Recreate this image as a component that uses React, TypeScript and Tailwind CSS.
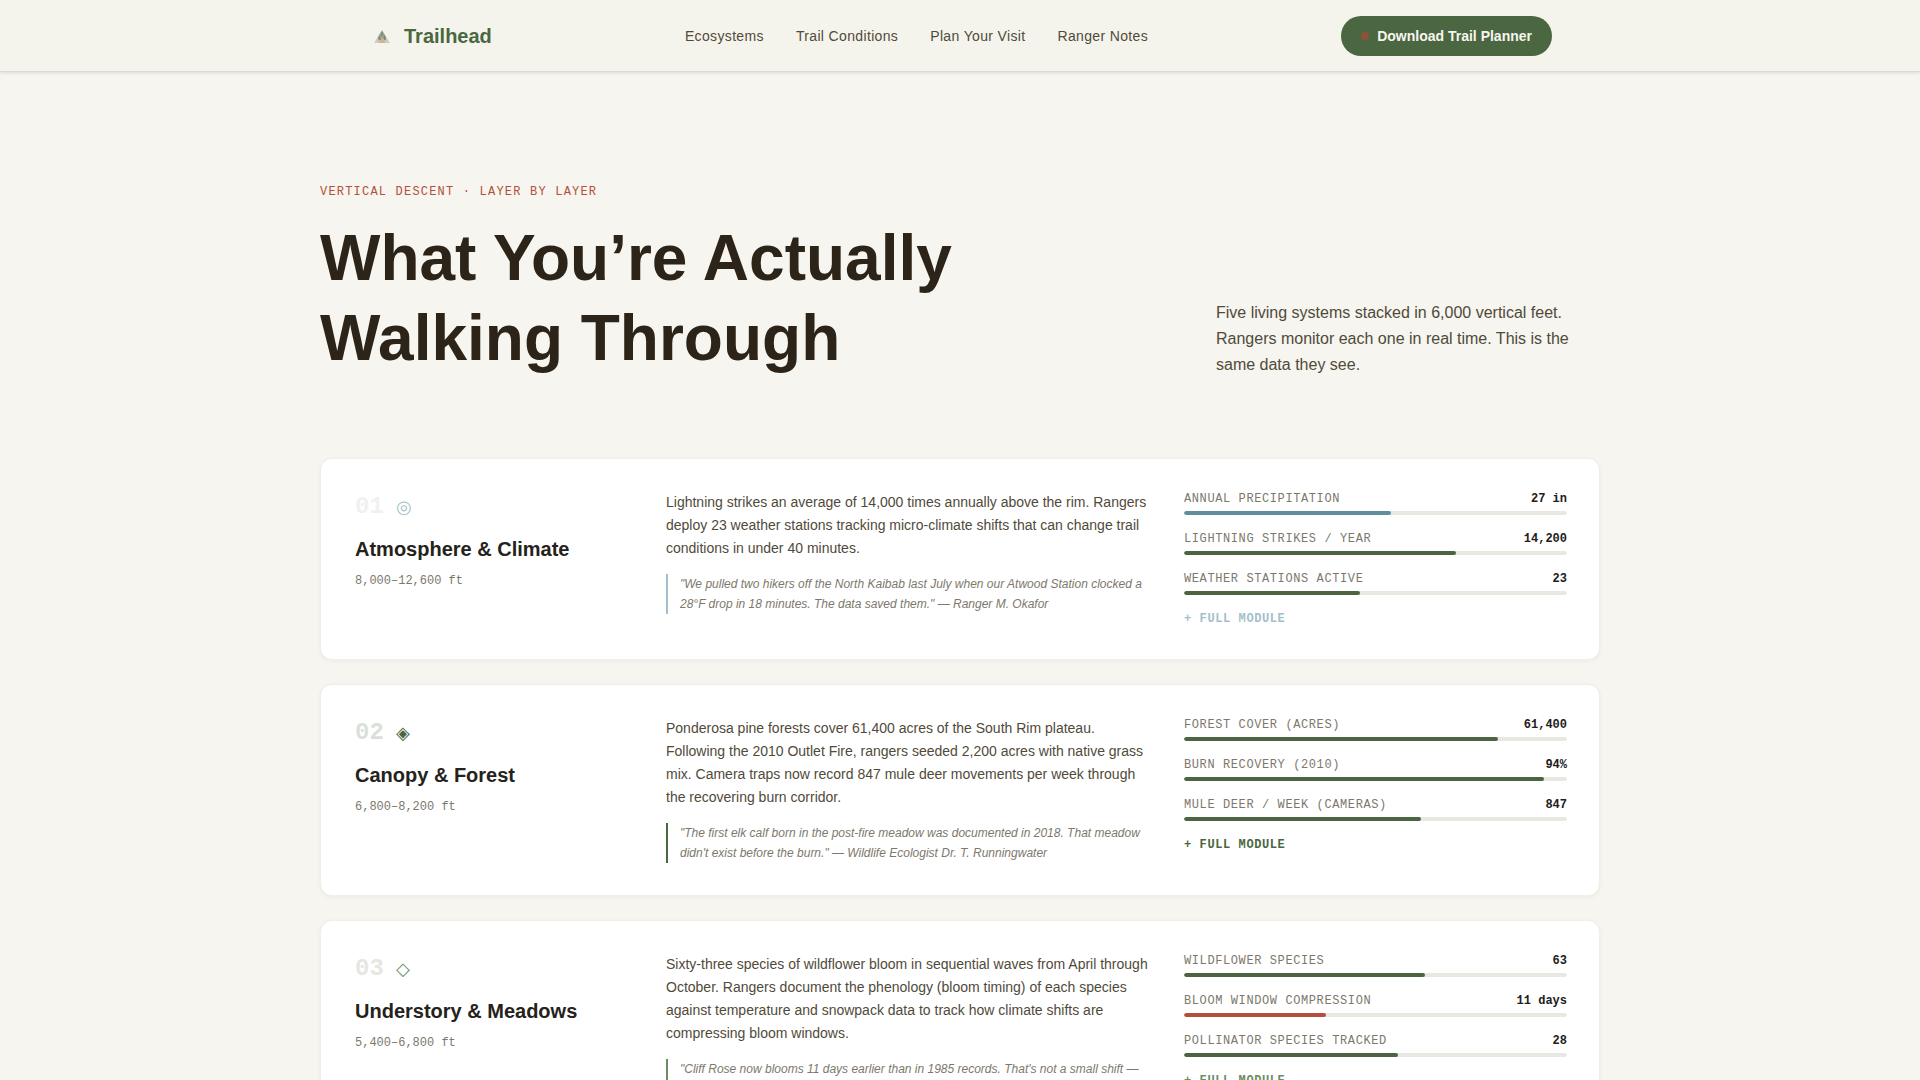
type Stat = { label: string; value: string; width: string; fill: string };
type Layer = {
  number: string;
  glyph: string;
  accent: string;
  numberTone: string;
  quoteBorder: string;
  title: string;
  elevation: string;
  body: string;
  quote: string;
  stats: Stat[];
};

const green = "bg-[#4c6444]";

const layers: Layer[] = [
  {
    number: "01",
    glyph: "◎",
    accent: "text-[#a3bfcc]",
    numberTone: "text-[#eff1f1]",
    quoteBorder: "border-[#a3bfcc]",
    title: "Atmosphere & Climate",
    elevation: "8,000–12,600 ft",
    body: "Lightning strikes an average of 14,000 times annually above the rim. Rangers deploy 23 weather stations tracking micro-climate shifts that can change trail conditions in under 40 minutes.",
    quote:
      "\"We pulled two hikers off the North Kaibab last July when our Atwood Station clocked a 28°F drop in 18 minutes. The data saved them.\" — Ranger M. Okafor",
    stats: [
      { label: "Annual Precipitation", value: "27 in", width: "54%", fill: "bg-[#628d9d]" },
      { label: "Lightning Strikes / Year", value: "14,200", width: "71%", fill: green },
      { label: "Weather Stations Active", value: "23", width: "46%", fill: green },
    ],
  },
  {
    number: "02",
    glyph: "◈",
    accent: "text-[#4a6741]",
    numberTone: "text-[#dbdfd9]",
    quoteBorder: "border-[#4a6741]",
    title: "Canopy & Forest",
    elevation: "6,800–8,200 ft",
    body: "Ponderosa pine forests cover 61,400 acres of the South Rim plateau. Following the 2010 Outlet Fire, rangers seeded 2,200 acres with native grass mix. Camera traps now record 847 mule deer movements per week through the recovering burn corridor.",
    quote:
      "\"The first elk calf born in the post-fire meadow was documented in 2018. That meadow didn't exist before the burn.\" — Wildlife Ecologist Dr. T. Runningwater",
    stats: [
      { label: "Forest Cover (acres)", value: "61,400", width: "82%", fill: green },
      { label: "Burn Recovery (2010)", value: "94%", width: "94%", fill: green },
      { label: "Mule Deer / Week (cameras)", value: "847", width: "62%", fill: green },
    ],
  },
  {
    number: "03",
    glyph: "◇",
    accent: "text-[#6b8f62]",
    numberTone: "text-[#e4e7e2]",
    quoteBorder: "border-[#6b8f62]",
    title: "Understory & Meadows",
    elevation: "5,400–6,800 ft",
    body: "Sixty-three species of wildflower bloom in sequential waves from April through October. Rangers document the phenology (bloom timing) of each species against temperature and snowpack data to track how climate shifts are compressing bloom windows.",
    quote:
      "\"Cliff Rose now blooms 11 days earlier than in 1985 records. That's not a small shift — that's a signal.\"",
    stats: [
      { label: "Wildflower Species", value: "63", width: "63%", fill: green },
      { label: "Bloom Window Compression", value: "11 days", width: "37%", fill: "bg-[#b3503a]" },
      { label: "Pollinator Species Tracked", value: "28", width: "56%", fill: green },
    ],
  },
];

const navLinks = ["Ecosystems", "Trail Conditions", "Plan Your Visit", "Ranger Notes"];
const mono = "font-['Liberation_Mono',monospace]";

function LogoMark() {
  return (
    <svg viewBox="0 0 28 28" className="size-7" aria-hidden="true">
      <path d="M14 8 22 21H6Z" fill="#cfcdbd" />
      <path d="M14 8.5 18 15 17.5 19 14 16 10 19 10 15Z" fill="#93a388" />
      <path d="M14 15 17.5 21H10.5Z" fill="#d2b09c" />
      <path d="M14 10v4M11 15l1.500 3M16.500 14l.5 4" stroke="#71836a" fill="none" />
    </svg>
  );
}

function NavBar() {
  return (
    <header className="bg-[#f5f4ec] shadow-[inset_0_-1px_0_#dadad2,0_1px_3px_rgba(44,36,22,0.12)]">
      <div className="mx-auto flex max-w-7xl items-center justify-between px-12 py-4">
        <a href="#top" className="flex items-center gap-2 text-xl font-bold text-[#4a6741]">
          <LogoMark />
          Trailhead
        </a>
        <nav className="flex gap-8 text-sm tracking-wide text-[#504a3a]">
          {navLinks.map((link) => (
            <a key={link} href="#layers">
              {link}
            </a>
          ))}
        </nav>
        <button className="flex h-10 items-center gap-2 rounded-full bg-[#4a6741] px-5 text-sm font-bold text-[#f7f5ee]">
          <span className="size-2 rounded-full bg-[#8f5138]" />
          Download Trail Planner
        </button>
      </div>
    </header>
  );
}

function StatRow({ stat }: { stat: Stat }) {
  return (
    <div>
      <div className="mb-1 flex justify-between text-xs leading-4">
        <span className="tracking-wider text-[#7d786c] uppercase">{stat.label}</span>
        <span className="font-bold text-[#22201a]">{stat.value}</span>
      </div>
      <div className="h-1 overflow-hidden rounded-full bg-[#e8e8e2]">
        <div className={`h-full rounded-full ${stat.fill}`} style={{ width: stat.width }} />
      </div>
    </div>
  );
}

function LayerCard({ layer }: { layer: Layer }) {
  return (
    <article className="grid grid-cols-[279px_1fr_383px] gap-8 rounded-xl border border-[#efeee8] bg-white py-8 pr-8 pl-[34px] shadow-[0_1px_4px_rgba(44,36,22,0.05)]">
      <div>
        <div className="flex items-center gap-3 leading-8">
          <span className={`text-2xl leading-8 font-bold ${mono} ${layer.numberTone}`}>{layer.number}</span>
          <span className={`text-lg leading-8 ${layer.accent}`}>{layer.glyph}</span>
        </div>
        <h2 className="mt-3 text-xl leading-7 font-bold text-[#25221b]">{layer.title}</h2>
        <p className={`mt-2 text-xs leading-5 text-[#7d786c] ${mono}`}>{layer.elevation}</p>
      </div>
      <div>
        <p className="text-sm leading-[23px] text-[#504a3a]">{layer.body}</p>
        <blockquote className={`mt-3.5 border-l-2 pl-3 text-xs leading-5 text-[#7d786c] italic ${layer.quoteBorder}`}>
          {layer.quote}
        </blockquote>
      </div>
      <div className={`flex flex-col items-start gap-4 ${mono}`}>
        <div className="flex w-full flex-col gap-4">
          {layer.stats.map((stat) => (
            <StatRow key={stat.label} stat={stat} />
          ))}
        </div>
        <button className={`text-xs leading-4 font-bold tracking-wider uppercase ${layer.accent}`}>
          + Full Module
        </button>
      </div>
    </article>
  );
}

export default function App() {
  return (
    <div id="top" className="min-h-screen bg-[#f6f5ef] font-['Liberation_Sans',Arial,sans-serif]">
      <NavBar />
      <main className="mx-auto max-w-7xl pt-[110px] pb-20">
        <div className="flex items-end justify-between">
          <div>
            <p className={`mb-4 text-xs leading-5 tracking-widest text-[#b3503a] uppercase ${mono}`}>
              Vertical Descent · Layer by Layer
            </p>
            <h1 className="text-[64px] leading-20 font-bold text-[#2c2418]">
              What You’re Actually
              <br />
              Walking Through
            </h1>
          </div>
          <p className="w-96 text-base leading-[26px] text-[#504a3a]">
            Five living systems stacked in 6,000 vertical feet. Rangers monitor each one in real time. This is the same
            data they see.
          </p>
        </div>
        <section id="layers" className="mt-20 flex flex-col gap-6">
          {layers.map((layer) => (
            <LayerCard key={layer.number} layer={layer} />
          ))}
        </section>
      </main>
    </div>
  );
}
